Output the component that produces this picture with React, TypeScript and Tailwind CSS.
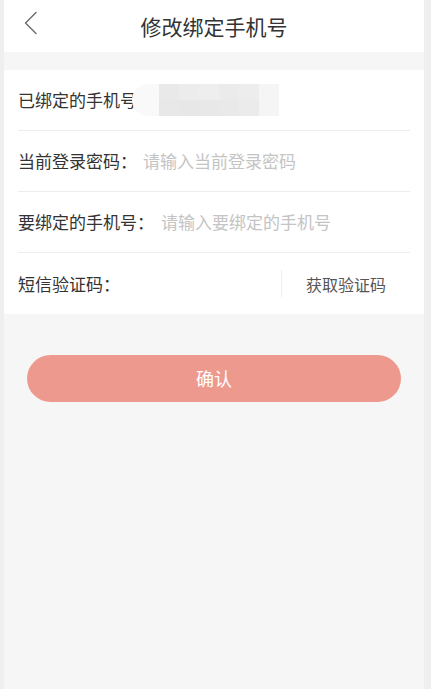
import React from "react";

const font = { fontFamily: '"Noto Sans CJK SC", "Noto Sans", sans-serif' };

function Row({ label, children, last }: { label: string; children?: React.ReactNode; last?: boolean }) {
  return (
    <div className={`flex h-[61px] items-center ${last ? "" : "border-b border-[#ededed]"}`}>
      <span className="shrink-0 text-[17px] text-[#333]">{label}</span>
      {children}
    </div>
  );
}

export default function App() {
  return (
    <div className="min-h-[689px] bg-[#efefef] pl-[4px] pr-[7px]" style={font}>
      <div className="flex min-h-[689px] flex-col bg-[#f6f6f6]">
        <header className="relative flex h-[52px] items-center justify-center bg-white">
          <button type="button" className="absolute left-[19px] top-[11px] p-0">
            <svg width="16" height="24" viewBox="0 0 16 24" fill="none">
              <path d="M13 1.5L2.5 12L13 22.5" stroke="#6a6a6a" strokeWidth="1.4" strokeLinecap="round" strokeLinejoin="round" />
            </svg>
          </button>
          <h1 className="text-[21px] leading-none text-[#333]">修改绑定手机号</h1>
        </header>

        <section className="mt-[18px] bg-white pl-[14px] pr-[14px]">
          <Row label="已绑定的手机号">
            {/* blurred number mask, overlaps the end of the label like the screenshot */}
            <div className="relative -ml-[5px] flex h-[32px] items-center">
              <div className="h-[32px] w-[27px] rounded-l-full bg-[#f9f9f9]" />
              <div className="grid h-[32px] w-[100px] grid-cols-5 grid-rows-2">
                <div className="bg-[#e9e9e9]" />
                <div className="bg-[#ececec]" />
                <div className="bg-[#eeeeee]" />
                <div className="bg-[#ebebeb]" />
                <div className="bg-[#ededed]" />
                <div className="bg-[#e8e8e8]" />
                <div className="bg-[#e7e7e7]" />
                <div className="bg-[#e8e8e8]" />
                <div className="bg-[#e9e9e9]" />
                <div className="bg-[#ebebeb]" />
              </div>
              <div className="h-[32px] w-[20px] bg-[#f5f5f5]" />
            </div>
          </Row>
          <Row label="当前登录密码：">
            <span className="ml-[6px] text-[17px] text-[#c4c4c4]">请输入当前登录密码</span>
          </Row>
          <Row label="要绑定的手机号：">
            <span className="ml-[7px] text-[17px] text-[#c4c4c4]">请输入要绑定的手机号</span>
          </Row>
          <Row label="短信验证码：" last>
            <div className="flex-1" />
            <div className="h-[27px] w-px bg-[#eeeeee]" />
            <span className="w-[128px] text-center text-[16px] text-[#555]">获取验证码</span>
          </Row>
        </section>

        <div className="px-[23px] pt-[41px]">
          <button
            type="button"
            className="flex h-[47px] w-full items-center justify-center rounded-full bg-[#ee998e] text-[18px] text-white"
          >
            确认
          </button>
        </div>
      </div>
    </div>
  );
}
